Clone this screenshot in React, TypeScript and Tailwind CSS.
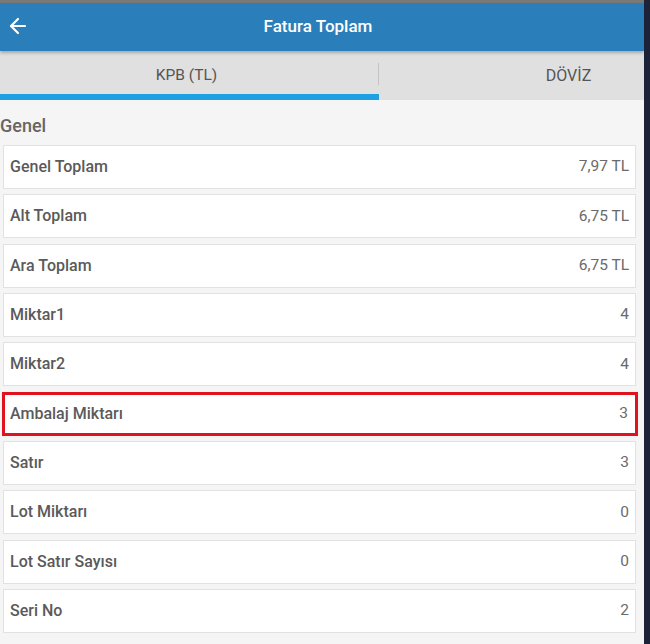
import { ArrowLeft } from 'lucide-react';

const rows = [
  { label: 'Genel Toplam', value: '7,97 TL' },
  { label: 'Alt Toplam', value: '6,75 TL' },
  { label: 'Ara Toplam', value: '6,75 TL' },
  { label: 'Miktar1', value: '4' },
  { label: 'Miktar2', value: '4' },
  { label: 'Ambalaj Miktarı', value: '3', highlight: true },
  { label: 'Satır', value: '3' },
  { label: 'Lot Miktarı', value: '0' },
  { label: 'Lot Satır Sayısı', value: '0' },
  { label: 'Seri No', value: '2' },
];

const App: React.FC = () => {
  return (
    <div className="flex h-[644px] w-[650px] overflow-hidden bg-[#1c2238] font-['Roboto',sans-serif]">
      <div className="flex w-[644px] flex-col overflow-hidden bg-[#f5f5f5]">
        {/* Top strip */}
        <div className="h-[3px] bg-[#7a7a7a]"></div>

        {/* Header */}
        <div className="relative z-10 flex h-[48px] items-center justify-center bg-[#2a7fba] pr-[8px] shadow-[0_2px_3px_rgba(0,0,0,0.25)]">
          <ArrowLeft className="absolute left-[6px] top-[11px] h-[24px] w-[24px] text-white" strokeWidth={2.2} />
          <span className="text-[17px] font-medium text-white">Fatura Toplam</span>
        </div>

        {/* Tabs */}
        <div className="flex h-[49px] bg-[#e0e0e0]">
          <div className="relative flex w-[379px] shrink-0 items-center justify-center">
            <span className="pr-[6px] text-[15.5px] text-[#555]">KPB (TL)</span>
            <div className="absolute bottom-0 left-0 h-[6px] w-full bg-[#1da1e2]"></div>
            <div className="absolute right-0 top-[12px] h-[22px] w-px bg-[#c4c4c4]"></div>
          </div>
          <div className="flex w-[379px] shrink-0 items-center justify-center">
            <span className="text-[16px] text-[#555]">DÖVİZ</span>
          </div>
        </div>

        {/* Content */}
        <div className="pt-[15px]">
          <div className="mb-[8px] text-[18px] font-medium leading-[22px] text-[#666]">Genel</div>
          <div className="flex flex-col gap-[5.33px] pl-[3px] pr-[8px]">
            {rows.map(row => (
              <div
                key={row.label}
                className={
                  row.highlight
                    ? '-ml-[1px] -mr-[2px] flex h-[44px] items-center justify-between border-[3px] border-[#e0141e] bg-white pl-[5px] pr-[7px]'
                    : 'flex h-[44px] items-center justify-between border border-[#e2e2e2] bg-white pl-[6px] pr-[6px]'
                }
              >
                <span className="text-[16px] font-medium text-[#5a5a5a]">{row.label}</span>
                <span className="text-[15.5px] text-[#6a6a6a]">{row.value}</span>
              </div>
            ))}
          </div>
        </div>
      </div>
    </div>
  );
};

export default App;
